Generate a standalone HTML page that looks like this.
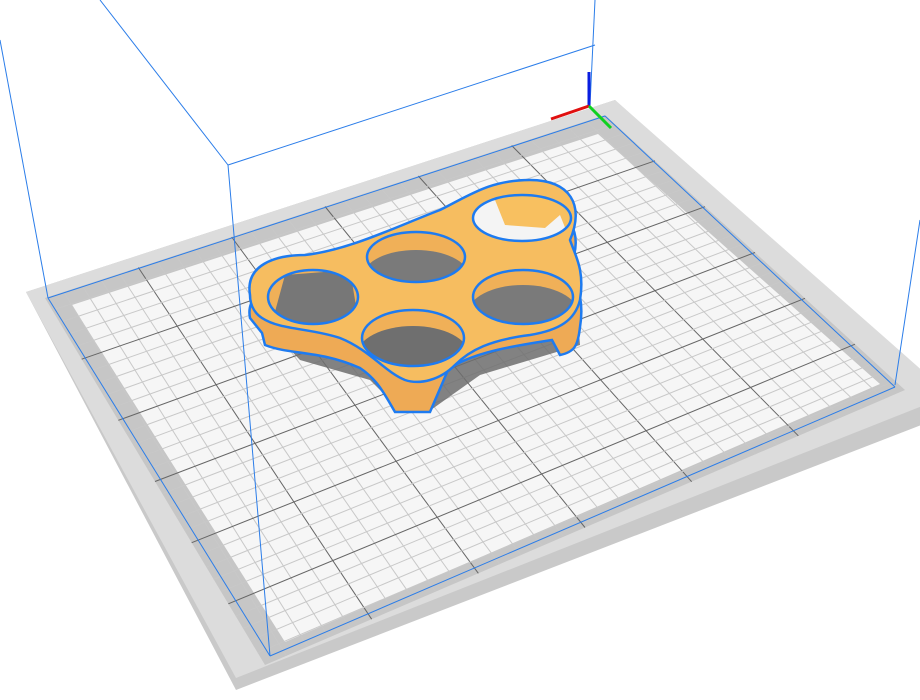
<!DOCTYPE html>
<html><head><meta charset="utf-8"><style>
html,body{margin:0;padding:0;background:#fff;width:920px;height:700px;overflow:hidden}
svg{display:block}
</style></head><body>
<svg id="s" width="920" height="700" viewBox="0 0 920 700" xmlns="http://www.w3.org/2000/svg">
<defs>
<clipPath id="h1"><ellipse cx="416" cy="257" rx="49" ry="25"/></clipPath>
<clipPath id="h2"><ellipse cx="522" cy="218" rx="49" ry="23"/></clipPath>
<clipPath id="h3"><ellipse cx="313" cy="297" rx="45" ry="27"/></clipPath>
<clipPath id="h4"><ellipse cx="523" cy="297" rx="50" ry="27"/></clipPath>
<clipPath id="h5"><ellipse cx="413" cy="338" rx="51" ry="28"/></clipPath>
</defs>
<polygon points="26,292 615,100 960,410 236,690" fill="#c9c9c9"/>
<polygon points="26,292 615,100 950,395 236,678" fill="#dcdcdc"/>
<polygon points="45,298 605,115 905,390 265,665" fill="#c6c6c6"/>
<polygon points="72,305 598,134 880,384 285,642" fill="#f6f6f6"/>
<g id="grid"></g>
<g stroke="#2b7de9" stroke-width="1" fill="none">
<line x1="0" y1="40" x2="48" y2="298"/>
<line x1="100" y1="0" x2="228" y2="165"/>
<line x1="228" y1="165" x2="595" y2="45"/>
<line x1="228" y1="165" x2="270" y2="656"/>
<line x1="595" y1="0" x2="590" y2="105"/>
<line x1="920" y1="220" x2="895" y2="385"/>
<polyline points="48,298 605,116"/>
<polyline points="270,656 895,387"/>
<line x1="48" y1="298" x2="270" y2="656"/>
<line x1="605" y1="116" x2="895" y2="387"/>
</g>
<polygon points="262,320 575,280 580,345 480,375 428,412 395,405 370,380 300,360" fill="#6d6d6d" opacity="0.85"/>
<path d="M250,318 C245,292 275,282 305,282 C350,277 400,252 440,237 C470,222 490,207 530,207 C570,207 585,232 570,267 C575,282 585,297 580,327 C578,345 575,352 560,355 L552,340 C520,345 470,352 448,370 L430,412 L395,412 C385,395 378,380 360,368 C320,350 290,355 265,345 L262,333 Z" fill="#eeaa55" stroke="#1e7bf0" stroke-width="2.5"/>
<path d="M250,295 C245,265 275,255 305,255 C350,250 400,225 440,210 C470,195 490,180 530,180 C570,180 585,205 570,240 C575,255 585,270 580,300 C575,320 560,330 530,335 C490,340 470,350 455,365 C440,380 420,385 405,380 C385,372 370,350 340,338 C310,328 280,330 262,318 C253,312 250,303 250,295 Z" fill="#f6bd60" stroke="#1e7bf0" stroke-width="2.5"/>
<g>
<ellipse cx="416" cy="257" rx="49" ry="25" fill="#f0b058"/>
<g clip-path="url(#h1)"><ellipse cx="416" cy="275" rx="52" ry="25" fill="#7a7a7a"/></g>
<ellipse cx="416" cy="257" rx="49" ry="25" fill="none" stroke="#1e7bf0" stroke-width="2.5"/>
<ellipse cx="522" cy="218" rx="49" ry="23" fill="#f8c060"/>
<g clip-path="url(#h2)"><polygon points="475,205 495,200 505,225 545,228 560,215 570,240 470,245" fill="#f4f4f4"/></g>
<ellipse cx="522" cy="218" rx="49" ry="23" fill="none" stroke="#1e7bf0" stroke-width="2.5"/>
<ellipse cx="313" cy="297" rx="45" ry="27" fill="#f0b058"/>
<g clip-path="url(#h3)"><polygon points="285,275 350,270 360,330 270,330" fill="#777"/></g>
<ellipse cx="313" cy="297" rx="45" ry="27" fill="none" stroke="#1e7bf0" stroke-width="2.5"/>
<ellipse cx="523" cy="297" rx="50" ry="27" fill="#f0b058"/>
<g clip-path="url(#h4)"><ellipse cx="523" cy="313" rx="55" ry="28" fill="#7a7a7a"/></g>
<ellipse cx="523" cy="297" rx="50" ry="27" fill="none" stroke="#1e7bf0" stroke-width="2.5"/>
<ellipse cx="413" cy="338" rx="51" ry="28" fill="#f0b058"/>
<g clip-path="url(#h5)"><ellipse cx="413" cy="355" rx="56" ry="29" fill="#6f6f6f"/></g>
<ellipse cx="413" cy="338" rx="51" ry="28" fill="none" stroke="#1e7bf0" stroke-width="2.5"/>
</g>
<line x1="589" y1="106" x2="589" y2="72" stroke="#0a1ee0" stroke-width="3"/>
<line x1="589" y1="106" x2="551" y2="119" stroke="#e01010" stroke-width="3"/>
<line x1="589" y1="106" x2="611" y2="128" stroke="#10d020" stroke-width="3"/>
</svg>
<script>
(function(){
var g=document.getElementById('grid');var NS='http://www.w3.org/2000/svg';
var TL=[45,298],TR=[605,115],BR=[905,390],BL=[265,665];
function P(u,v){var a=[TL[0]+(TR[0]-TL[0])*u,TL[1]+(TR[1]-TL[1])*u];var b=[BL[0]+(BR[0]-BL[0])*u,BL[1]+(BR[1]-BL[1])*u];return[a[0]+(b[0]-a[0])*v,a[1]+(b[1]-a[1])*v];}
function L(p,q,c,w){var l=document.createElementNS(NS,'line');l.setAttribute('x1',p[0]);l.setAttribute('y1',p[1]);l.setAttribute('x2',q[0]);l.setAttribute('y2',q[1]);l.setAttribute('stroke',c);l.setAttribute('stroke-width',w);g.appendChild(l);}
var N=30,M=30;
for(var i=1;i<N;i++){var u=i/N;L(P(u,0),P(u,1),i%5==0?'#666':'#c8c8c8',1);}
for(var j=1;j<M;j++){var v=j/M;L(P(0,v),P(1,v),j%5==0?'#666':'#c8c8c8',1);}
})();
</script>
</body></html>
